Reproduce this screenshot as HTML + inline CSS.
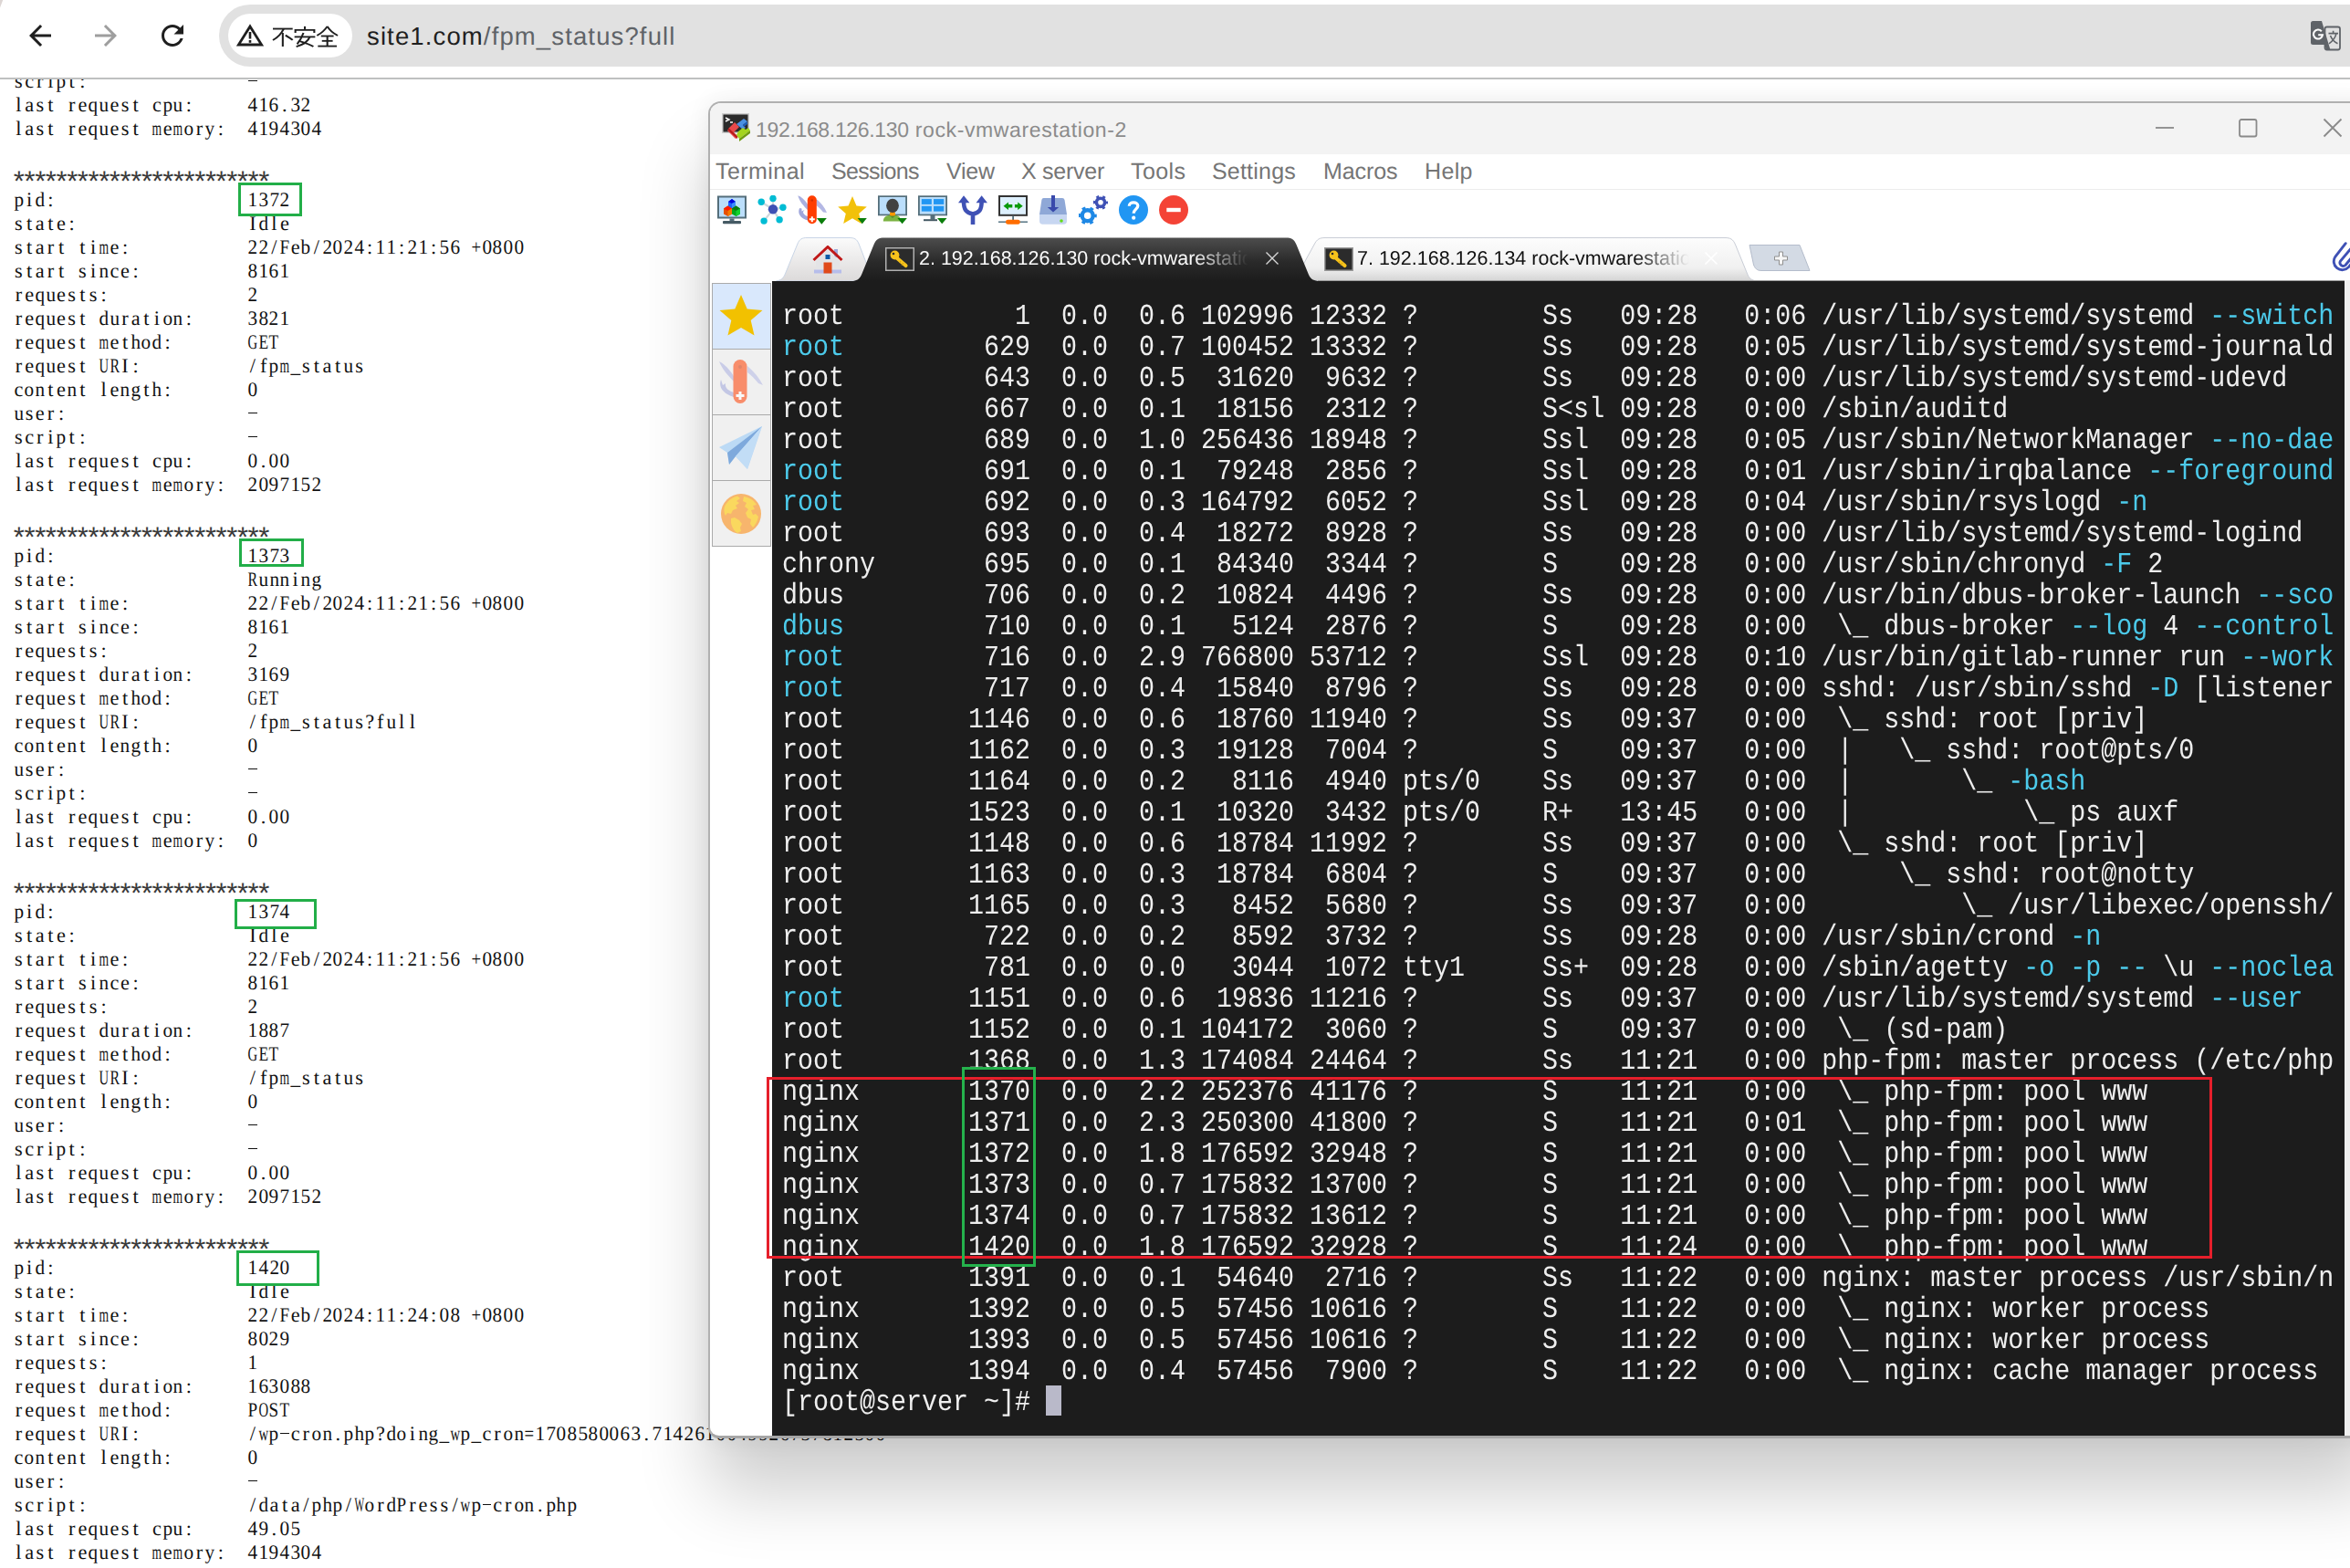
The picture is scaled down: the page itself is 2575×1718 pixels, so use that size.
<!DOCTYPE html>
<html><head><meta charset="utf-8"><title>fpm status</title>
<style>
html,body{margin:0;padding:0}
body{text-rendering:geometricPrecision;width:2575px;height:1718px;position:relative;overflow:hidden;background:#fff;font-family:"Liberation Sans",sans-serif}
*{box-sizing:border-box}
.abs{position:absolute}
#st{position:absolute;left:14.600px;top:76.300px;font-family:"Liberation Serif",serif;font-size:22.300px;line-height:26px;color:#111;white-space:nowrap}
#st .ln{height:26px;white-space:nowrap}
#st b{display:inline-block;width:11.667px;text-align:center;font-weight:normal}
#st b.w{text-align:left;transform-origin:0 50%}
#st i{display:inline-block}
.gb{position:absolute;border:3px solid #22ae48}
#bar{position:absolute;left:0;top:0;width:2575px;height:85px;background:#fff}
#barline{position:absolute;left:0;top:85px;width:2575px;height:2px;background:#bfc0c0}
#pill{position:absolute;left:240px;top:5px;width:2400px;height:68px;border-radius:34px;background:#e1e1e1}
#chip{position:absolute;left:250px;top:15px;width:136px;height:48px;border-radius:24px;background:#fff}
#url{position:absolute;left:402px;top:21.5px;font-size:27.5px;line-height:36px;color:#5f6368;white-space:nowrap;letter-spacing:1.13px}
#url b{font-weight:normal;color:#1f1f1f}
#win{position:absolute;left:776px;top:111px;width:1830px;height:1465px;background:#fff;border:2px solid #b0b0b0;border-bottom:3px solid #a6a6a6;border-radius:14px 0 0 12px;box-shadow:0 58px 78px rgba(0,0,0,0.195),0 0 26px rgba(0,0,0,0.07)}
#title{position:absolute;left:778px;top:113px;width:1800px;height:56px;background:#f3f3f3;border-radius:12px 0 0 0}
#ttext{position:absolute;left:828px;top:128px;font-size:23px;line-height:28px;color:#8b8b8b;white-space:nowrap;letter-spacing:0.23px}
.menu{position:absolute;top:173px;font-size:25px;line-height:30px;color:#757575;white-space:nowrap}
#menuline{position:absolute;left:778px;top:207px;width:1800px;height:1px;background:#ececec}
.ti{position:absolute;top:214px;width:32px;height:32px}
#term{position:absolute;left:846px;top:307.600px;width:1723px;height:1265.400px;background:#1c1c1c}
#tt{position:absolute;left:857.4px;top:330px;margin:0;font-family:"Liberation Mono",monospace;font-size:32px;line-height:34px;color:#eeeeee;transform:scaleX(0.8854);transform-origin:0 0;white-space:pre}
#tt i{font-style:normal;color:#4ccaea}
#cursor{position:absolute;left:1146px;top:1518px;width:17px;height:33px;background:#b9b9c9}
.rb{position:absolute;border:3px solid #e61f2b}
.tabtxt{position:absolute;top:270px;font-size:21.5px;line-height:26px;white-space:nowrap;overflow:hidden}
.sc{position:absolute;left:780px;width:65px;height:73px;border:1px solid #aaa;background:#f0f0f0}
#st s{display:inline-block;width:9.500px;margin:0 1.100px;border-top:1.600px solid #111;vertical-align:7.500px;text-decoration:none}
#st u{text-decoration:none;font-family:"Liberation Mono",monospace;position:relative;top:9.4px;left:-3px;font-size:31px;letter-spacing:-6.933px;line-height:0;color:#3a3a3a}

</style></head>
<body>
<div id="st"><div class="ln"><b>s</b><b>c</b><b>r</b><b>i</b><b class="w" style="transform:translateX(0.53px) scaleX(0.951)">p</b><b>t</b><b>:</b><i style="width:175.005px"></i><s></s></div>
<div class="ln"><b>l</b><b>a</b><b>s</b><b>t</b><i style="width:11.667px"></i><b>r</b><b>e</b><b class="w" style="transform:translateX(0.53px) scaleX(0.951)">q</b><b class="w" style="transform:translateX(0.53px) scaleX(0.951)">u</b><b>e</b><b>s</b><b>t</b><i style="width:11.667px"></i><b>c</b><b class="w" style="transform:translateX(0.53px) scaleX(0.951)">p</b><b class="w" style="transform:translateX(0.53px) scaleX(0.951)">u</b><b>:</b><i style="width:58.335px"></i><b class="w" style="transform:translateX(0.53px) scaleX(0.951)">4</b><b class="w" style="transform:translateX(0.53px) scaleX(0.951)">1</b><b class="w" style="transform:translateX(0.53px) scaleX(0.951)">6</b><b>.</b><b class="w" style="transform:translateX(0.53px) scaleX(0.951)">3</b><b class="w" style="transform:translateX(0.53px) scaleX(0.951)">2</b></div>
<div class="ln"><b>l</b><b>a</b><b>s</b><b>t</b><i style="width:11.667px"></i><b>r</b><b>e</b><b class="w" style="transform:translateX(0.53px) scaleX(0.951)">q</b><b class="w" style="transform:translateX(0.53px) scaleX(0.951)">u</b><b>e</b><b>s</b><b>t</b><i style="width:11.667px"></i><b class="w" style="transform:translateX(0.53px) scaleX(0.611)">m</b><b>e</b><b class="w" style="transform:translateX(0.53px) scaleX(0.611)">m</b><b class="w" style="transform:translateX(0.53px) scaleX(0.951)">o</b><b>r</b><b class="w" style="transform:translateX(0.53px) scaleX(0.951)">y</b><b>:</b><i style="width:23.334px"></i><b class="w" style="transform:translateX(0.53px) scaleX(0.951)">4</b><b class="w" style="transform:translateX(0.53px) scaleX(0.951)">1</b><b class="w" style="transform:translateX(0.53px) scaleX(0.951)">9</b><b class="w" style="transform:translateX(0.53px) scaleX(0.951)">4</b><b class="w" style="transform:translateX(0.53px) scaleX(0.951)">3</b><b class="w" style="transform:translateX(0.53px) scaleX(0.951)">0</b><b class="w" style="transform:translateX(0.53px) scaleX(0.951)">4</b></div>
<div class="ln"></div>
<div class="ln"><u>************************</u></div>
<div class="ln"><b class="w" style="transform:translateX(0.53px) scaleX(0.951)">p</b><b>i</b><b class="w" style="transform:translateX(0.53px) scaleX(0.951)">d</b><b>:</b><i style="width:210.006px"></i><b class="w" style="transform:translateX(0.53px) scaleX(0.951)">1</b><b class="w" style="transform:translateX(0.53px) scaleX(0.951)">3</b><b class="w" style="transform:translateX(0.53px) scaleX(0.951)">7</b><b class="w" style="transform:translateX(0.53px) scaleX(0.951)">2</b></div>
<div class="ln"><b>s</b><b>t</b><b>a</b><b>t</b><b>e</b><b>:</b><i style="width:186.672px"></i><b>I</b><b class="w" style="transform:translateX(0.53px) scaleX(0.951)">d</b><b>l</b><b>e</b></div>
<div class="ln"><b>s</b><b>t</b><b>a</b><b>r</b><b>t</b><i style="width:11.667px"></i><b>t</b><b>i</b><b class="w" style="transform:translateX(0.53px) scaleX(0.611)">m</b><b>e</b><b>:</b><i style="width:128.337px"></i><b class="w" style="transform:translateX(0.53px) scaleX(0.951)">2</b><b class="w" style="transform:translateX(0.53px) scaleX(0.951)">2</b><b>/</b><b class="w" style="transform:translateX(0.53px) scaleX(0.855)">F</b><b>e</b><b class="w" style="transform:translateX(0.53px) scaleX(0.951)">b</b><b>/</b><b class="w" style="transform:translateX(0.53px) scaleX(0.951)">2</b><b class="w" style="transform:translateX(0.53px) scaleX(0.951)">0</b><b class="w" style="transform:translateX(0.53px) scaleX(0.951)">2</b><b class="w" style="transform:translateX(0.53px) scaleX(0.951)">4</b><b>:</b><b class="w" style="transform:translateX(0.53px) scaleX(0.951)">1</b><b class="w" style="transform:translateX(0.53px) scaleX(0.951)">1</b><b>:</b><b class="w" style="transform:translateX(0.53px) scaleX(0.951)">2</b><b class="w" style="transform:translateX(0.53px) scaleX(0.951)">1</b><b>:</b><b class="w" style="transform:translateX(0.53px) scaleX(0.951)">5</b><b class="w" style="transform:translateX(0.53px) scaleX(0.951)">6</b><i style="width:11.667px"></i><b class="w" style="transform:translateX(0.53px) scaleX(0.843)">+</b><b class="w" style="transform:translateX(0.53px) scaleX(0.951)">0</b><b class="w" style="transform:translateX(0.53px) scaleX(0.951)">8</b><b class="w" style="transform:translateX(0.53px) scaleX(0.951)">0</b><b class="w" style="transform:translateX(0.53px) scaleX(0.951)">0</b></div>
<div class="ln"><b>s</b><b>t</b><b>a</b><b>r</b><b>t</b><i style="width:11.667px"></i><b>s</b><b>i</b><b class="w" style="transform:translateX(0.53px) scaleX(0.951)">n</b><b>c</b><b>e</b><b>:</b><i style="width:116.670px"></i><b class="w" style="transform:translateX(0.53px) scaleX(0.951)">8</b><b class="w" style="transform:translateX(0.53px) scaleX(0.951)">1</b><b class="w" style="transform:translateX(0.53px) scaleX(0.951)">6</b><b class="w" style="transform:translateX(0.53px) scaleX(0.951)">1</b></div>
<div class="ln"><b>r</b><b>e</b><b class="w" style="transform:translateX(0.53px) scaleX(0.951)">q</b><b class="w" style="transform:translateX(0.53px) scaleX(0.951)">u</b><b>e</b><b>s</b><b>t</b><b>s</b><b>:</b><i style="width:151.671px"></i><b class="w" style="transform:translateX(0.53px) scaleX(0.951)">2</b></div>
<div class="ln"><b>r</b><b>e</b><b class="w" style="transform:translateX(0.53px) scaleX(0.951)">q</b><b class="w" style="transform:translateX(0.53px) scaleX(0.951)">u</b><b>e</b><b>s</b><b>t</b><i style="width:11.667px"></i><b class="w" style="transform:translateX(0.53px) scaleX(0.951)">d</b><b class="w" style="transform:translateX(0.53px) scaleX(0.951)">u</b><b>r</b><b>a</b><b>t</b><b>i</b><b class="w" style="transform:translateX(0.53px) scaleX(0.951)">o</b><b class="w" style="transform:translateX(0.53px) scaleX(0.951)">n</b><b>:</b><i style="width:58.335px"></i><b class="w" style="transform:translateX(0.53px) scaleX(0.951)">3</b><b class="w" style="transform:translateX(0.53px) scaleX(0.951)">8</b><b class="w" style="transform:translateX(0.53px) scaleX(0.951)">2</b><b class="w" style="transform:translateX(0.53px) scaleX(0.951)">1</b></div>
<div class="ln"><b>r</b><b>e</b><b class="w" style="transform:translateX(0.53px) scaleX(0.951)">q</b><b class="w" style="transform:translateX(0.53px) scaleX(0.951)">u</b><b>e</b><b>s</b><b>t</b><i style="width:11.667px"></i><b class="w" style="transform:translateX(0.53px) scaleX(0.611)">m</b><b>e</b><b>t</b><b class="w" style="transform:translateX(0.53px) scaleX(0.951)">h</b><b class="w" style="transform:translateX(0.53px) scaleX(0.951)">o</b><b class="w" style="transform:translateX(0.53px) scaleX(0.951)">d</b><b>:</b><i style="width:81.669px"></i><b class="w" style="transform:translateX(0.53px) scaleX(0.658)">G</b><b class="w" style="transform:translateX(0.53px) scaleX(0.778)">E</b><b class="w" style="transform:translateX(0.53px) scaleX(0.778)">T</b></div>
<div class="ln"><b>r</b><b>e</b><b class="w" style="transform:translateX(0.53px) scaleX(0.951)">q</b><b class="w" style="transform:translateX(0.53px) scaleX(0.951)">u</b><b>e</b><b>s</b><b>t</b><i style="width:11.667px"></i><b class="w" style="transform:translateX(0.53px) scaleX(0.658)">U</b><b class="w" style="transform:translateX(0.53px) scaleX(0.713)">R</b><b>I</b><b>:</b><i style="width:116.670px"></i><b>/</b><b>f</b><b class="w" style="transform:translateX(0.53px) scaleX(0.951)">p</b><b class="w" style="transform:translateX(0.53px) scaleX(0.611)">m</b><b class="w" style="transform:translateX(0.53px) scaleX(0.951)">_</b><b>s</b><b>t</b><b>a</b><b>t</b><b class="w" style="transform:translateX(0.53px) scaleX(0.951)">u</b><b>s</b></div>
<div class="ln"><b>c</b><b class="w" style="transform:translateX(0.53px) scaleX(0.951)">o</b><b class="w" style="transform:translateX(0.53px) scaleX(0.951)">n</b><b>t</b><b>e</b><b class="w" style="transform:translateX(0.53px) scaleX(0.951)">n</b><b>t</b><i style="width:11.667px"></i><b>l</b><b>e</b><b class="w" style="transform:translateX(0.53px) scaleX(0.951)">n</b><b class="w" style="transform:translateX(0.53px) scaleX(0.951)">g</b><b>t</b><b class="w" style="transform:translateX(0.53px) scaleX(0.951)">h</b><b>:</b><i style="width:81.669px"></i><b class="w" style="transform:translateX(0.53px) scaleX(0.951)">0</b></div>
<div class="ln"><b class="w" style="transform:translateX(0.53px) scaleX(0.951)">u</b><b>s</b><b>e</b><b>r</b><b>:</b><i style="width:198.339px"></i><s></s></div>
<div class="ln"><b>s</b><b>c</b><b>r</b><b>i</b><b class="w" style="transform:translateX(0.53px) scaleX(0.951)">p</b><b>t</b><b>:</b><i style="width:175.005px"></i><s></s></div>
<div class="ln"><b>l</b><b>a</b><b>s</b><b>t</b><i style="width:11.667px"></i><b>r</b><b>e</b><b class="w" style="transform:translateX(0.53px) scaleX(0.951)">q</b><b class="w" style="transform:translateX(0.53px) scaleX(0.951)">u</b><b>e</b><b>s</b><b>t</b><i style="width:11.667px"></i><b>c</b><b class="w" style="transform:translateX(0.53px) scaleX(0.951)">p</b><b class="w" style="transform:translateX(0.53px) scaleX(0.951)">u</b><b>:</b><i style="width:58.335px"></i><b class="w" style="transform:translateX(0.53px) scaleX(0.951)">0</b><b>.</b><b class="w" style="transform:translateX(0.53px) scaleX(0.951)">0</b><b class="w" style="transform:translateX(0.53px) scaleX(0.951)">0</b></div>
<div class="ln"><b>l</b><b>a</b><b>s</b><b>t</b><i style="width:11.667px"></i><b>r</b><b>e</b><b class="w" style="transform:translateX(0.53px) scaleX(0.951)">q</b><b class="w" style="transform:translateX(0.53px) scaleX(0.951)">u</b><b>e</b><b>s</b><b>t</b><i style="width:11.667px"></i><b class="w" style="transform:translateX(0.53px) scaleX(0.611)">m</b><b>e</b><b class="w" style="transform:translateX(0.53px) scaleX(0.611)">m</b><b class="w" style="transform:translateX(0.53px) scaleX(0.951)">o</b><b>r</b><b class="w" style="transform:translateX(0.53px) scaleX(0.951)">y</b><b>:</b><i style="width:23.334px"></i><b class="w" style="transform:translateX(0.53px) scaleX(0.951)">2</b><b class="w" style="transform:translateX(0.53px) scaleX(0.951)">0</b><b class="w" style="transform:translateX(0.53px) scaleX(0.951)">9</b><b class="w" style="transform:translateX(0.53px) scaleX(0.951)">7</b><b class="w" style="transform:translateX(0.53px) scaleX(0.951)">1</b><b class="w" style="transform:translateX(0.53px) scaleX(0.951)">5</b><b class="w" style="transform:translateX(0.53px) scaleX(0.951)">2</b></div>
<div class="ln"></div>
<div class="ln"><u>************************</u></div>
<div class="ln"><b class="w" style="transform:translateX(0.53px) scaleX(0.951)">p</b><b>i</b><b class="w" style="transform:translateX(0.53px) scaleX(0.951)">d</b><b>:</b><i style="width:210.006px"></i><b class="w" style="transform:translateX(0.53px) scaleX(0.951)">1</b><b class="w" style="transform:translateX(0.53px) scaleX(0.951)">3</b><b class="w" style="transform:translateX(0.53px) scaleX(0.951)">7</b><b class="w" style="transform:translateX(0.53px) scaleX(0.951)">3</b></div>
<div class="ln"><b>s</b><b>t</b><b>a</b><b>t</b><b>e</b><b>:</b><i style="width:186.672px"></i><b class="w" style="transform:translateX(0.53px) scaleX(0.713)">R</b><b class="w" style="transform:translateX(0.53px) scaleX(0.951)">u</b><b class="w" style="transform:translateX(0.53px) scaleX(0.951)">n</b><b class="w" style="transform:translateX(0.53px) scaleX(0.951)">n</b><b>i</b><b class="w" style="transform:translateX(0.53px) scaleX(0.951)">n</b><b class="w" style="transform:translateX(0.53px) scaleX(0.951)">g</b></div>
<div class="ln"><b>s</b><b>t</b><b>a</b><b>r</b><b>t</b><i style="width:11.667px"></i><b>t</b><b>i</b><b class="w" style="transform:translateX(0.53px) scaleX(0.611)">m</b><b>e</b><b>:</b><i style="width:128.337px"></i><b class="w" style="transform:translateX(0.53px) scaleX(0.951)">2</b><b class="w" style="transform:translateX(0.53px) scaleX(0.951)">2</b><b>/</b><b class="w" style="transform:translateX(0.53px) scaleX(0.855)">F</b><b>e</b><b class="w" style="transform:translateX(0.53px) scaleX(0.951)">b</b><b>/</b><b class="w" style="transform:translateX(0.53px) scaleX(0.951)">2</b><b class="w" style="transform:translateX(0.53px) scaleX(0.951)">0</b><b class="w" style="transform:translateX(0.53px) scaleX(0.951)">2</b><b class="w" style="transform:translateX(0.53px) scaleX(0.951)">4</b><b>:</b><b class="w" style="transform:translateX(0.53px) scaleX(0.951)">1</b><b class="w" style="transform:translateX(0.53px) scaleX(0.951)">1</b><b>:</b><b class="w" style="transform:translateX(0.53px) scaleX(0.951)">2</b><b class="w" style="transform:translateX(0.53px) scaleX(0.951)">1</b><b>:</b><b class="w" style="transform:translateX(0.53px) scaleX(0.951)">5</b><b class="w" style="transform:translateX(0.53px) scaleX(0.951)">6</b><i style="width:11.667px"></i><b class="w" style="transform:translateX(0.53px) scaleX(0.843)">+</b><b class="w" style="transform:translateX(0.53px) scaleX(0.951)">0</b><b class="w" style="transform:translateX(0.53px) scaleX(0.951)">8</b><b class="w" style="transform:translateX(0.53px) scaleX(0.951)">0</b><b class="w" style="transform:translateX(0.53px) scaleX(0.951)">0</b></div>
<div class="ln"><b>s</b><b>t</b><b>a</b><b>r</b><b>t</b><i style="width:11.667px"></i><b>s</b><b>i</b><b class="w" style="transform:translateX(0.53px) scaleX(0.951)">n</b><b>c</b><b>e</b><b>:</b><i style="width:116.670px"></i><b class="w" style="transform:translateX(0.53px) scaleX(0.951)">8</b><b class="w" style="transform:translateX(0.53px) scaleX(0.951)">1</b><b class="w" style="transform:translateX(0.53px) scaleX(0.951)">6</b><b class="w" style="transform:translateX(0.53px) scaleX(0.951)">1</b></div>
<div class="ln"><b>r</b><b>e</b><b class="w" style="transform:translateX(0.53px) scaleX(0.951)">q</b><b class="w" style="transform:translateX(0.53px) scaleX(0.951)">u</b><b>e</b><b>s</b><b>t</b><b>s</b><b>:</b><i style="width:151.671px"></i><b class="w" style="transform:translateX(0.53px) scaleX(0.951)">2</b></div>
<div class="ln"><b>r</b><b>e</b><b class="w" style="transform:translateX(0.53px) scaleX(0.951)">q</b><b class="w" style="transform:translateX(0.53px) scaleX(0.951)">u</b><b>e</b><b>s</b><b>t</b><i style="width:11.667px"></i><b class="w" style="transform:translateX(0.53px) scaleX(0.951)">d</b><b class="w" style="transform:translateX(0.53px) scaleX(0.951)">u</b><b>r</b><b>a</b><b>t</b><b>i</b><b class="w" style="transform:translateX(0.53px) scaleX(0.951)">o</b><b class="w" style="transform:translateX(0.53px) scaleX(0.951)">n</b><b>:</b><i style="width:58.335px"></i><b class="w" style="transform:translateX(0.53px) scaleX(0.951)">3</b><b class="w" style="transform:translateX(0.53px) scaleX(0.951)">1</b><b class="w" style="transform:translateX(0.53px) scaleX(0.951)">6</b><b class="w" style="transform:translateX(0.53px) scaleX(0.951)">9</b></div>
<div class="ln"><b>r</b><b>e</b><b class="w" style="transform:translateX(0.53px) scaleX(0.951)">q</b><b class="w" style="transform:translateX(0.53px) scaleX(0.951)">u</b><b>e</b><b>s</b><b>t</b><i style="width:11.667px"></i><b class="w" style="transform:translateX(0.53px) scaleX(0.611)">m</b><b>e</b><b>t</b><b class="w" style="transform:translateX(0.53px) scaleX(0.951)">h</b><b class="w" style="transform:translateX(0.53px) scaleX(0.951)">o</b><b class="w" style="transform:translateX(0.53px) scaleX(0.951)">d</b><b>:</b><i style="width:81.669px"></i><b class="w" style="transform:translateX(0.53px) scaleX(0.658)">G</b><b class="w" style="transform:translateX(0.53px) scaleX(0.778)">E</b><b class="w" style="transform:translateX(0.53px) scaleX(0.778)">T</b></div>
<div class="ln"><b>r</b><b>e</b><b class="w" style="transform:translateX(0.53px) scaleX(0.951)">q</b><b class="w" style="transform:translateX(0.53px) scaleX(0.951)">u</b><b>e</b><b>s</b><b>t</b><i style="width:11.667px"></i><b class="w" style="transform:translateX(0.53px) scaleX(0.658)">U</b><b class="w" style="transform:translateX(0.53px) scaleX(0.713)">R</b><b>I</b><b>:</b><i style="width:116.670px"></i><b>/</b><b>f</b><b class="w" style="transform:translateX(0.53px) scaleX(0.951)">p</b><b class="w" style="transform:translateX(0.53px) scaleX(0.611)">m</b><b class="w" style="transform:translateX(0.53px) scaleX(0.951)">_</b><b>s</b><b>t</b><b>a</b><b>t</b><b class="w" style="transform:translateX(0.53px) scaleX(0.951)">u</b><b>s</b><b>?</b><b>f</b><b class="w" style="transform:translateX(0.53px) scaleX(0.951)">u</b><b>l</b><b>l</b></div>
<div class="ln"><b>c</b><b class="w" style="transform:translateX(0.53px) scaleX(0.951)">o</b><b class="w" style="transform:translateX(0.53px) scaleX(0.951)">n</b><b>t</b><b>e</b><b class="w" style="transform:translateX(0.53px) scaleX(0.951)">n</b><b>t</b><i style="width:11.667px"></i><b>l</b><b>e</b><b class="w" style="transform:translateX(0.53px) scaleX(0.951)">n</b><b class="w" style="transform:translateX(0.53px) scaleX(0.951)">g</b><b>t</b><b class="w" style="transform:translateX(0.53px) scaleX(0.951)">h</b><b>:</b><i style="width:81.669px"></i><b class="w" style="transform:translateX(0.53px) scaleX(0.951)">0</b></div>
<div class="ln"><b class="w" style="transform:translateX(0.53px) scaleX(0.951)">u</b><b>s</b><b>e</b><b>r</b><b>:</b><i style="width:198.339px"></i><s></s></div>
<div class="ln"><b>s</b><b>c</b><b>r</b><b>i</b><b class="w" style="transform:translateX(0.53px) scaleX(0.951)">p</b><b>t</b><b>:</b><i style="width:175.005px"></i><s></s></div>
<div class="ln"><b>l</b><b>a</b><b>s</b><b>t</b><i style="width:11.667px"></i><b>r</b><b>e</b><b class="w" style="transform:translateX(0.53px) scaleX(0.951)">q</b><b class="w" style="transform:translateX(0.53px) scaleX(0.951)">u</b><b>e</b><b>s</b><b>t</b><i style="width:11.667px"></i><b>c</b><b class="w" style="transform:translateX(0.53px) scaleX(0.951)">p</b><b class="w" style="transform:translateX(0.53px) scaleX(0.951)">u</b><b>:</b><i style="width:58.335px"></i><b class="w" style="transform:translateX(0.53px) scaleX(0.951)">0</b><b>.</b><b class="w" style="transform:translateX(0.53px) scaleX(0.951)">0</b><b class="w" style="transform:translateX(0.53px) scaleX(0.951)">0</b></div>
<div class="ln"><b>l</b><b>a</b><b>s</b><b>t</b><i style="width:11.667px"></i><b>r</b><b>e</b><b class="w" style="transform:translateX(0.53px) scaleX(0.951)">q</b><b class="w" style="transform:translateX(0.53px) scaleX(0.951)">u</b><b>e</b><b>s</b><b>t</b><i style="width:11.667px"></i><b class="w" style="transform:translateX(0.53px) scaleX(0.611)">m</b><b>e</b><b class="w" style="transform:translateX(0.53px) scaleX(0.611)">m</b><b class="w" style="transform:translateX(0.53px) scaleX(0.951)">o</b><b>r</b><b class="w" style="transform:translateX(0.53px) scaleX(0.951)">y</b><b>:</b><i style="width:23.334px"></i><b class="w" style="transform:translateX(0.53px) scaleX(0.951)">0</b></div>
<div class="ln"></div>
<div class="ln"><u>************************</u></div>
<div class="ln"><b class="w" style="transform:translateX(0.53px) scaleX(0.951)">p</b><b>i</b><b class="w" style="transform:translateX(0.53px) scaleX(0.951)">d</b><b>:</b><i style="width:210.006px"></i><b class="w" style="transform:translateX(0.53px) scaleX(0.951)">1</b><b class="w" style="transform:translateX(0.53px) scaleX(0.951)">3</b><b class="w" style="transform:translateX(0.53px) scaleX(0.951)">7</b><b class="w" style="transform:translateX(0.53px) scaleX(0.951)">4</b></div>
<div class="ln"><b>s</b><b>t</b><b>a</b><b>t</b><b>e</b><b>:</b><i style="width:186.672px"></i><b>I</b><b class="w" style="transform:translateX(0.53px) scaleX(0.951)">d</b><b>l</b><b>e</b></div>
<div class="ln"><b>s</b><b>t</b><b>a</b><b>r</b><b>t</b><i style="width:11.667px"></i><b>t</b><b>i</b><b class="w" style="transform:translateX(0.53px) scaleX(0.611)">m</b><b>e</b><b>:</b><i style="width:128.337px"></i><b class="w" style="transform:translateX(0.53px) scaleX(0.951)">2</b><b class="w" style="transform:translateX(0.53px) scaleX(0.951)">2</b><b>/</b><b class="w" style="transform:translateX(0.53px) scaleX(0.855)">F</b><b>e</b><b class="w" style="transform:translateX(0.53px) scaleX(0.951)">b</b><b>/</b><b class="w" style="transform:translateX(0.53px) scaleX(0.951)">2</b><b class="w" style="transform:translateX(0.53px) scaleX(0.951)">0</b><b class="w" style="transform:translateX(0.53px) scaleX(0.951)">2</b><b class="w" style="transform:translateX(0.53px) scaleX(0.951)">4</b><b>:</b><b class="w" style="transform:translateX(0.53px) scaleX(0.951)">1</b><b class="w" style="transform:translateX(0.53px) scaleX(0.951)">1</b><b>:</b><b class="w" style="transform:translateX(0.53px) scaleX(0.951)">2</b><b class="w" style="transform:translateX(0.53px) scaleX(0.951)">1</b><b>:</b><b class="w" style="transform:translateX(0.53px) scaleX(0.951)">5</b><b class="w" style="transform:translateX(0.53px) scaleX(0.951)">6</b><i style="width:11.667px"></i><b class="w" style="transform:translateX(0.53px) scaleX(0.843)">+</b><b class="w" style="transform:translateX(0.53px) scaleX(0.951)">0</b><b class="w" style="transform:translateX(0.53px) scaleX(0.951)">8</b><b class="w" style="transform:translateX(0.53px) scaleX(0.951)">0</b><b class="w" style="transform:translateX(0.53px) scaleX(0.951)">0</b></div>
<div class="ln"><b>s</b><b>t</b><b>a</b><b>r</b><b>t</b><i style="width:11.667px"></i><b>s</b><b>i</b><b class="w" style="transform:translateX(0.53px) scaleX(0.951)">n</b><b>c</b><b>e</b><b>:</b><i style="width:116.670px"></i><b class="w" style="transform:translateX(0.53px) scaleX(0.951)">8</b><b class="w" style="transform:translateX(0.53px) scaleX(0.951)">1</b><b class="w" style="transform:translateX(0.53px) scaleX(0.951)">6</b><b class="w" style="transform:translateX(0.53px) scaleX(0.951)">1</b></div>
<div class="ln"><b>r</b><b>e</b><b class="w" style="transform:translateX(0.53px) scaleX(0.951)">q</b><b class="w" style="transform:translateX(0.53px) scaleX(0.951)">u</b><b>e</b><b>s</b><b>t</b><b>s</b><b>:</b><i style="width:151.671px"></i><b class="w" style="transform:translateX(0.53px) scaleX(0.951)">2</b></div>
<div class="ln"><b>r</b><b>e</b><b class="w" style="transform:translateX(0.53px) scaleX(0.951)">q</b><b class="w" style="transform:translateX(0.53px) scaleX(0.951)">u</b><b>e</b><b>s</b><b>t</b><i style="width:11.667px"></i><b class="w" style="transform:translateX(0.53px) scaleX(0.951)">d</b><b class="w" style="transform:translateX(0.53px) scaleX(0.951)">u</b><b>r</b><b>a</b><b>t</b><b>i</b><b class="w" style="transform:translateX(0.53px) scaleX(0.951)">o</b><b class="w" style="transform:translateX(0.53px) scaleX(0.951)">n</b><b>:</b><i style="width:58.335px"></i><b class="w" style="transform:translateX(0.53px) scaleX(0.951)">1</b><b class="w" style="transform:translateX(0.53px) scaleX(0.951)">8</b><b class="w" style="transform:translateX(0.53px) scaleX(0.951)">8</b><b class="w" style="transform:translateX(0.53px) scaleX(0.951)">7</b></div>
<div class="ln"><b>r</b><b>e</b><b class="w" style="transform:translateX(0.53px) scaleX(0.951)">q</b><b class="w" style="transform:translateX(0.53px) scaleX(0.951)">u</b><b>e</b><b>s</b><b>t</b><i style="width:11.667px"></i><b class="w" style="transform:translateX(0.53px) scaleX(0.611)">m</b><b>e</b><b>t</b><b class="w" style="transform:translateX(0.53px) scaleX(0.951)">h</b><b class="w" style="transform:translateX(0.53px) scaleX(0.951)">o</b><b class="w" style="transform:translateX(0.53px) scaleX(0.951)">d</b><b>:</b><i style="width:81.669px"></i><b class="w" style="transform:translateX(0.53px) scaleX(0.658)">G</b><b class="w" style="transform:translateX(0.53px) scaleX(0.778)">E</b><b class="w" style="transform:translateX(0.53px) scaleX(0.778)">T</b></div>
<div class="ln"><b>r</b><b>e</b><b class="w" style="transform:translateX(0.53px) scaleX(0.951)">q</b><b class="w" style="transform:translateX(0.53px) scaleX(0.951)">u</b><b>e</b><b>s</b><b>t</b><i style="width:11.667px"></i><b class="w" style="transform:translateX(0.53px) scaleX(0.658)">U</b><b class="w" style="transform:translateX(0.53px) scaleX(0.713)">R</b><b>I</b><b>:</b><i style="width:116.670px"></i><b>/</b><b>f</b><b class="w" style="transform:translateX(0.53px) scaleX(0.951)">p</b><b class="w" style="transform:translateX(0.53px) scaleX(0.611)">m</b><b class="w" style="transform:translateX(0.53px) scaleX(0.951)">_</b><b>s</b><b>t</b><b>a</b><b>t</b><b class="w" style="transform:translateX(0.53px) scaleX(0.951)">u</b><b>s</b></div>
<div class="ln"><b>c</b><b class="w" style="transform:translateX(0.53px) scaleX(0.951)">o</b><b class="w" style="transform:translateX(0.53px) scaleX(0.951)">n</b><b>t</b><b>e</b><b class="w" style="transform:translateX(0.53px) scaleX(0.951)">n</b><b>t</b><i style="width:11.667px"></i><b>l</b><b>e</b><b class="w" style="transform:translateX(0.53px) scaleX(0.951)">n</b><b class="w" style="transform:translateX(0.53px) scaleX(0.951)">g</b><b>t</b><b class="w" style="transform:translateX(0.53px) scaleX(0.951)">h</b><b>:</b><i style="width:81.669px"></i><b class="w" style="transform:translateX(0.53px) scaleX(0.951)">0</b></div>
<div class="ln"><b class="w" style="transform:translateX(0.53px) scaleX(0.951)">u</b><b>s</b><b>e</b><b>r</b><b>:</b><i style="width:198.339px"></i><s></s></div>
<div class="ln"><b>s</b><b>c</b><b>r</b><b>i</b><b class="w" style="transform:translateX(0.53px) scaleX(0.951)">p</b><b>t</b><b>:</b><i style="width:175.005px"></i><s></s></div>
<div class="ln"><b>l</b><b>a</b><b>s</b><b>t</b><i style="width:11.667px"></i><b>r</b><b>e</b><b class="w" style="transform:translateX(0.53px) scaleX(0.951)">q</b><b class="w" style="transform:translateX(0.53px) scaleX(0.951)">u</b><b>e</b><b>s</b><b>t</b><i style="width:11.667px"></i><b>c</b><b class="w" style="transform:translateX(0.53px) scaleX(0.951)">p</b><b class="w" style="transform:translateX(0.53px) scaleX(0.951)">u</b><b>:</b><i style="width:58.335px"></i><b class="w" style="transform:translateX(0.53px) scaleX(0.951)">0</b><b>.</b><b class="w" style="transform:translateX(0.53px) scaleX(0.951)">0</b><b class="w" style="transform:translateX(0.53px) scaleX(0.951)">0</b></div>
<div class="ln"><b>l</b><b>a</b><b>s</b><b>t</b><i style="width:11.667px"></i><b>r</b><b>e</b><b class="w" style="transform:translateX(0.53px) scaleX(0.951)">q</b><b class="w" style="transform:translateX(0.53px) scaleX(0.951)">u</b><b>e</b><b>s</b><b>t</b><i style="width:11.667px"></i><b class="w" style="transform:translateX(0.53px) scaleX(0.611)">m</b><b>e</b><b class="w" style="transform:translateX(0.53px) scaleX(0.611)">m</b><b class="w" style="transform:translateX(0.53px) scaleX(0.951)">o</b><b>r</b><b class="w" style="transform:translateX(0.53px) scaleX(0.951)">y</b><b>:</b><i style="width:23.334px"></i><b class="w" style="transform:translateX(0.53px) scaleX(0.951)">2</b><b class="w" style="transform:translateX(0.53px) scaleX(0.951)">0</b><b class="w" style="transform:translateX(0.53px) scaleX(0.951)">9</b><b class="w" style="transform:translateX(0.53px) scaleX(0.951)">7</b><b class="w" style="transform:translateX(0.53px) scaleX(0.951)">1</b><b class="w" style="transform:translateX(0.53px) scaleX(0.951)">5</b><b class="w" style="transform:translateX(0.53px) scaleX(0.951)">2</b></div>
<div class="ln"></div>
<div class="ln"><u>************************</u></div>
<div class="ln"><b class="w" style="transform:translateX(0.53px) scaleX(0.951)">p</b><b>i</b><b class="w" style="transform:translateX(0.53px) scaleX(0.951)">d</b><b>:</b><i style="width:210.006px"></i><b class="w" style="transform:translateX(0.53px) scaleX(0.951)">1</b><b class="w" style="transform:translateX(0.53px) scaleX(0.951)">4</b><b class="w" style="transform:translateX(0.53px) scaleX(0.951)">2</b><b class="w" style="transform:translateX(0.53px) scaleX(0.951)">0</b></div>
<div class="ln"><b>s</b><b>t</b><b>a</b><b>t</b><b>e</b><b>:</b><i style="width:186.672px"></i><b>I</b><b class="w" style="transform:translateX(0.53px) scaleX(0.951)">d</b><b>l</b><b>e</b></div>
<div class="ln"><b>s</b><b>t</b><b>a</b><b>r</b><b>t</b><i style="width:11.667px"></i><b>t</b><b>i</b><b class="w" style="transform:translateX(0.53px) scaleX(0.611)">m</b><b>e</b><b>:</b><i style="width:128.337px"></i><b class="w" style="transform:translateX(0.53px) scaleX(0.951)">2</b><b class="w" style="transform:translateX(0.53px) scaleX(0.951)">2</b><b>/</b><b class="w" style="transform:translateX(0.53px) scaleX(0.855)">F</b><b>e</b><b class="w" style="transform:translateX(0.53px) scaleX(0.951)">b</b><b>/</b><b class="w" style="transform:translateX(0.53px) scaleX(0.951)">2</b><b class="w" style="transform:translateX(0.53px) scaleX(0.951)">0</b><b class="w" style="transform:translateX(0.53px) scaleX(0.951)">2</b><b class="w" style="transform:translateX(0.53px) scaleX(0.951)">4</b><b>:</b><b class="w" style="transform:translateX(0.53px) scaleX(0.951)">1</b><b class="w" style="transform:translateX(0.53px) scaleX(0.951)">1</b><b>:</b><b class="w" style="transform:translateX(0.53px) scaleX(0.951)">2</b><b class="w" style="transform:translateX(0.53px) scaleX(0.951)">4</b><b>:</b><b class="w" style="transform:translateX(0.53px) scaleX(0.951)">0</b><b class="w" style="transform:translateX(0.53px) scaleX(0.951)">8</b><i style="width:11.667px"></i><b class="w" style="transform:translateX(0.53px) scaleX(0.843)">+</b><b class="w" style="transform:translateX(0.53px) scaleX(0.951)">0</b><b class="w" style="transform:translateX(0.53px) scaleX(0.951)">8</b><b class="w" style="transform:translateX(0.53px) scaleX(0.951)">0</b><b class="w" style="transform:translateX(0.53px) scaleX(0.951)">0</b></div>
<div class="ln"><b>s</b><b>t</b><b>a</b><b>r</b><b>t</b><i style="width:11.667px"></i><b>s</b><b>i</b><b class="w" style="transform:translateX(0.53px) scaleX(0.951)">n</b><b>c</b><b>e</b><b>:</b><i style="width:116.670px"></i><b class="w" style="transform:translateX(0.53px) scaleX(0.951)">8</b><b class="w" style="transform:translateX(0.53px) scaleX(0.951)">0</b><b class="w" style="transform:translateX(0.53px) scaleX(0.951)">2</b><b class="w" style="transform:translateX(0.53px) scaleX(0.951)">9</b></div>
<div class="ln"><b>r</b><b>e</b><b class="w" style="transform:translateX(0.53px) scaleX(0.951)">q</b><b class="w" style="transform:translateX(0.53px) scaleX(0.951)">u</b><b>e</b><b>s</b><b>t</b><b>s</b><b>:</b><i style="width:151.671px"></i><b class="w" style="transform:translateX(0.53px) scaleX(0.951)">1</b></div>
<div class="ln"><b>r</b><b>e</b><b class="w" style="transform:translateX(0.53px) scaleX(0.951)">q</b><b class="w" style="transform:translateX(0.53px) scaleX(0.951)">u</b><b>e</b><b>s</b><b>t</b><i style="width:11.667px"></i><b class="w" style="transform:translateX(0.53px) scaleX(0.951)">d</b><b class="w" style="transform:translateX(0.53px) scaleX(0.951)">u</b><b>r</b><b>a</b><b>t</b><b>i</b><b class="w" style="transform:translateX(0.53px) scaleX(0.951)">o</b><b class="w" style="transform:translateX(0.53px) scaleX(0.951)">n</b><b>:</b><i style="width:58.335px"></i><b class="w" style="transform:translateX(0.53px) scaleX(0.951)">1</b><b class="w" style="transform:translateX(0.53px) scaleX(0.951)">6</b><b class="w" style="transform:translateX(0.53px) scaleX(0.951)">3</b><b class="w" style="transform:translateX(0.53px) scaleX(0.951)">0</b><b class="w" style="transform:translateX(0.53px) scaleX(0.951)">8</b><b class="w" style="transform:translateX(0.53px) scaleX(0.951)">8</b></div>
<div class="ln"><b>r</b><b>e</b><b class="w" style="transform:translateX(0.53px) scaleX(0.951)">q</b><b class="w" style="transform:translateX(0.53px) scaleX(0.951)">u</b><b>e</b><b>s</b><b>t</b><i style="width:11.667px"></i><b class="w" style="transform:translateX(0.53px) scaleX(0.611)">m</b><b>e</b><b>t</b><b class="w" style="transform:translateX(0.53px) scaleX(0.951)">h</b><b class="w" style="transform:translateX(0.53px) scaleX(0.951)">o</b><b class="w" style="transform:translateX(0.53px) scaleX(0.951)">d</b><b>:</b><i style="width:81.669px"></i><b class="w" style="transform:translateX(0.53px) scaleX(0.855)">P</b><b class="w" style="transform:translateX(0.53px) scaleX(0.658)">O</b><b class="w" style="transform:translateX(0.53px) scaleX(0.855)">S</b><b class="w" style="transform:translateX(0.53px) scaleX(0.778)">T</b></div>
<div class="ln"><b>r</b><b>e</b><b class="w" style="transform:translateX(0.53px) scaleX(0.951)">q</b><b class="w" style="transform:translateX(0.53px) scaleX(0.951)">u</b><b>e</b><b>s</b><b>t</b><i style="width:11.667px"></i><b class="w" style="transform:translateX(0.53px) scaleX(0.658)">U</b><b class="w" style="transform:translateX(0.53px) scaleX(0.713)">R</b><b>I</b><b>:</b><i style="width:116.670px"></i><b>/</b><b class="w" style="transform:translateX(0.53px) scaleX(0.658)">w</b><b class="w" style="transform:translateX(0.53px) scaleX(0.951)">p</b><s></s><b>c</b><b>r</b><b class="w" style="transform:translateX(0.53px) scaleX(0.951)">o</b><b class="w" style="transform:translateX(0.53px) scaleX(0.951)">n</b><b>.</b><b class="w" style="transform:translateX(0.53px) scaleX(0.951)">p</b><b class="w" style="transform:translateX(0.53px) scaleX(0.951)">h</b><b class="w" style="transform:translateX(0.53px) scaleX(0.951)">p</b><b>?</b><b class="w" style="transform:translateX(0.53px) scaleX(0.951)">d</b><b class="w" style="transform:translateX(0.53px) scaleX(0.951)">o</b><b>i</b><b class="w" style="transform:translateX(0.53px) scaleX(0.951)">n</b><b class="w" style="transform:translateX(0.53px) scaleX(0.951)">g</b><b class="w" style="transform:translateX(0.53px) scaleX(0.951)">_</b><b class="w" style="transform:translateX(0.53px) scaleX(0.658)">w</b><b class="w" style="transform:translateX(0.53px) scaleX(0.951)">p</b><b class="w" style="transform:translateX(0.53px) scaleX(0.951)">_</b><b>c</b><b>r</b><b class="w" style="transform:translateX(0.53px) scaleX(0.951)">o</b><b class="w" style="transform:translateX(0.53px) scaleX(0.951)">n</b><b class="w" style="transform:translateX(0.53px) scaleX(0.843)">=</b><b class="w" style="transform:translateX(0.53px) scaleX(0.951)">1</b><b class="w" style="transform:translateX(0.53px) scaleX(0.951)">7</b><b class="w" style="transform:translateX(0.53px) scaleX(0.951)">0</b><b class="w" style="transform:translateX(0.53px) scaleX(0.951)">8</b><b class="w" style="transform:translateX(0.53px) scaleX(0.951)">5</b><b class="w" style="transform:translateX(0.53px) scaleX(0.951)">8</b><b class="w" style="transform:translateX(0.53px) scaleX(0.951)">0</b><b class="w" style="transform:translateX(0.53px) scaleX(0.951)">0</b><b class="w" style="transform:translateX(0.53px) scaleX(0.951)">6</b><b class="w" style="transform:translateX(0.53px) scaleX(0.951)">3</b><b>.</b><b class="w" style="transform:translateX(0.53px) scaleX(0.951)">7</b><b class="w" style="transform:translateX(0.53px) scaleX(0.951)">1</b><b class="w" style="transform:translateX(0.53px) scaleX(0.951)">4</b><b class="w" style="transform:translateX(0.53px) scaleX(0.951)">2</b><b class="w" style="transform:translateX(0.53px) scaleX(0.951)">6</b><b class="w" style="transform:translateX(0.53px) scaleX(0.951)">1</b><b class="w" style="transform:translateX(0.53px) scaleX(0.951)">0</b><b class="w" style="transform:translateX(0.53px) scaleX(0.951)">0</b><b class="w" style="transform:translateX(0.53px) scaleX(0.951)">4</b><b class="w" style="transform:translateX(0.53px) scaleX(0.951)">9</b><b class="w" style="transform:translateX(0.53px) scaleX(0.951)">9</b><b class="w" style="transform:translateX(0.53px) scaleX(0.951)">2</b><b class="w" style="transform:translateX(0.53px) scaleX(0.951)">6</b><b class="w" style="transform:translateX(0.53px) scaleX(0.951)">7</b><b class="w" style="transform:translateX(0.53px) scaleX(0.951)">5</b><b class="w" style="transform:translateX(0.53px) scaleX(0.951)">7</b><b class="w" style="transform:translateX(0.53px) scaleX(0.951)">8</b><b class="w" style="transform:translateX(0.53px) scaleX(0.951)">1</b><b class="w" style="transform:translateX(0.53px) scaleX(0.951)">2</b><b class="w" style="transform:translateX(0.53px) scaleX(0.951)">5</b><b class="w" style="transform:translateX(0.53px) scaleX(0.951)">0</b><b class="w" style="transform:translateX(0.53px) scaleX(0.951)">0</b></div>
<div class="ln"><b>c</b><b class="w" style="transform:translateX(0.53px) scaleX(0.951)">o</b><b class="w" style="transform:translateX(0.53px) scaleX(0.951)">n</b><b>t</b><b>e</b><b class="w" style="transform:translateX(0.53px) scaleX(0.951)">n</b><b>t</b><i style="width:11.667px"></i><b>l</b><b>e</b><b class="w" style="transform:translateX(0.53px) scaleX(0.951)">n</b><b class="w" style="transform:translateX(0.53px) scaleX(0.951)">g</b><b>t</b><b class="w" style="transform:translateX(0.53px) scaleX(0.951)">h</b><b>:</b><i style="width:81.669px"></i><b class="w" style="transform:translateX(0.53px) scaleX(0.951)">0</b></div>
<div class="ln"><b class="w" style="transform:translateX(0.53px) scaleX(0.951)">u</b><b>s</b><b>e</b><b>r</b><b>:</b><i style="width:198.339px"></i><s></s></div>
<div class="ln"><b>s</b><b>c</b><b>r</b><b>i</b><b class="w" style="transform:translateX(0.53px) scaleX(0.951)">p</b><b>t</b><b>:</b><i style="width:175.005px"></i><b>/</b><b class="w" style="transform:translateX(0.53px) scaleX(0.951)">d</b><b>a</b><b>t</b><b>a</b><b>/</b><b class="w" style="transform:translateX(0.53px) scaleX(0.951)">p</b><b class="w" style="transform:translateX(0.53px) scaleX(0.951)">h</b><b class="w" style="transform:translateX(0.53px) scaleX(0.951)">p</b><b>/</b><b class="w" style="transform:translateX(0.53px) scaleX(0.504)">W</b><b class="w" style="transform:translateX(0.53px) scaleX(0.951)">o</b><b>r</b><b class="w" style="transform:translateX(0.53px) scaleX(0.951)">d</b><b class="w" style="transform:translateX(0.53px) scaleX(0.855)">P</b><b>r</b><b>e</b><b>s</b><b>s</b><b>/</b><b class="w" style="transform:translateX(0.53px) scaleX(0.658)">w</b><b class="w" style="transform:translateX(0.53px) scaleX(0.951)">p</b><s></s><b>c</b><b>r</b><b class="w" style="transform:translateX(0.53px) scaleX(0.951)">o</b><b class="w" style="transform:translateX(0.53px) scaleX(0.951)">n</b><b>.</b><b class="w" style="transform:translateX(0.53px) scaleX(0.951)">p</b><b class="w" style="transform:translateX(0.53px) scaleX(0.951)">h</b><b class="w" style="transform:translateX(0.53px) scaleX(0.951)">p</b></div>
<div class="ln"><b>l</b><b>a</b><b>s</b><b>t</b><i style="width:11.667px"></i><b>r</b><b>e</b><b class="w" style="transform:translateX(0.53px) scaleX(0.951)">q</b><b class="w" style="transform:translateX(0.53px) scaleX(0.951)">u</b><b>e</b><b>s</b><b>t</b><i style="width:11.667px"></i><b>c</b><b class="w" style="transform:translateX(0.53px) scaleX(0.951)">p</b><b class="w" style="transform:translateX(0.53px) scaleX(0.951)">u</b><b>:</b><i style="width:58.335px"></i><b class="w" style="transform:translateX(0.53px) scaleX(0.951)">4</b><b class="w" style="transform:translateX(0.53px) scaleX(0.951)">9</b><b>.</b><b class="w" style="transform:translateX(0.53px) scaleX(0.951)">0</b><b class="w" style="transform:translateX(0.53px) scaleX(0.951)">5</b></div>
<div class="ln"><b>l</b><b>a</b><b>s</b><b>t</b><i style="width:11.667px"></i><b>r</b><b>e</b><b class="w" style="transform:translateX(0.53px) scaleX(0.951)">q</b><b class="w" style="transform:translateX(0.53px) scaleX(0.951)">u</b><b>e</b><b>s</b><b>t</b><i style="width:11.667px"></i><b class="w" style="transform:translateX(0.53px) scaleX(0.611)">m</b><b>e</b><b class="w" style="transform:translateX(0.53px) scaleX(0.611)">m</b><b class="w" style="transform:translateX(0.53px) scaleX(0.951)">o</b><b>r</b><b class="w" style="transform:translateX(0.53px) scaleX(0.951)">y</b><b>:</b><i style="width:23.334px"></i><b class="w" style="transform:translateX(0.53px) scaleX(0.951)">4</b><b class="w" style="transform:translateX(0.53px) scaleX(0.951)">1</b><b class="w" style="transform:translateX(0.53px) scaleX(0.951)">9</b><b class="w" style="transform:translateX(0.53px) scaleX(0.951)">4</b><b class="w" style="transform:translateX(0.53px) scaleX(0.951)">3</b><b class="w" style="transform:translateX(0.53px) scaleX(0.951)">0</b><b class="w" style="transform:translateX(0.53px) scaleX(0.951)">4</b></div></div>
<div class="gb" style="left:261px;top:200px;width:70px;height:37px"></div>
<div class="gb" style="left:262px;top:590px;width:71px;height:31px"></div>
<div class="gb" style="left:257px;top:985px;width:90px;height:33px"></div>
<div class="gb" style="left:259px;top:1370px;width:91px;height:39px"></div>
<div id="bar"></div><svg class="abs" style="left:0;top:0" width="4" height="9"><path d="M0 0 H3.200 L0 8.500Z" fill="#ddd6d4"/></svg><div id="barline"></div>
<div id="pill"></div><div id="chip"></div>
<svg class="abs" style="left:26px;top:21px" width="36" height="36" viewBox="0 0 24 24"><path d="M20 11H7.83l5.59-5.59L12 4l-8 8 8 8 1.41-1.41L7.83 13H20v-2z" fill="#1f1f1f"/></svg>
<svg class="abs" style="left:98px;top:21px" width="36" height="36" viewBox="0 0 24 24"><path d="M12 4l-1.41 1.41L16.17 11H4v2h12.17l-5.58 5.59L12 20l8-8z" fill="#9e9e9e"/></svg>
<svg class="abs" style="left:170.5px;top:21px" width="36" height="36" viewBox="0 0 24 24"><path d="M17.65 6.35C16.2 4.9 14.21 4 12 4c-4.42 0-7.99 3.58-7.99 8s3.57 8 7.99 8c3.73 0 6.84-2.55 7.73-6h-2.08c-.82 2.33-3.04 4-5.65 4-3.31 0-6-2.69-6-6s2.69-6 6-6c1.66 0 3.14.69 4.22 1.78L13 11h7V4l-2.35 2.35z" fill="#1f1f1f"/></svg>
<svg class="abs" style="left:258px;top:24px" width="32" height="28" viewBox="0 0 32 28"><path d="M16 5 L28.600 25 H3.400 Z" fill="none" stroke="#1f1f1f" stroke-width="2.800" stroke-linejoin="miter"/><rect x="14.7" y="11" width="2.6" height="7.5" fill="#1f1f1f"/><rect x="14.7" y="20" width="2.6" height="2.8" fill="#1f1f1f"/></svg>
<svg class="abs" style="left:297.500px;top:28.300px" width="73" height="24.800" preserveAspectRatio="none" viewBox="0 0 74 28" fill="none" stroke="#1f1f1f" stroke-width="2.1" stroke-linecap="butt">
<!-- bu -->
<path d="M1 4 H23"/><path d="M13 4 C10 11 6 15 1 18"/><path d="M12 9 V26"/><path d="M15 12 C18 14 21 16 23 18"/>
<!-- an -->
<path d="M36.5 1 V5"/><path d="M26 9 V5.5 H47 V9"/><path d="M25 14 H48"/><path d="M35 9 C33 15 31 19 28 23"/><path d="M42 14 C40 20 34 24 27 26"/><path d="M30 19 C36 21 42 23 46 26"/>
<!-- quan -->
<path d="M61.5 1 C58 7 54 10 50 12.5"/><path d="M61.5 1 C64 6 69 10 73 12.5"/><path d="M54.5 13 H68.5"/><path d="M55.5 19 H67.5"/><path d="M61.5 13 V25"/><path d="M51 25.5 H72"/>
</svg>
<div id="url"><b>site1.com</b>/fpm_status?full</div>
<svg class="abs" style="left:2528px;top:18px" width="44" height="42" viewBox="2528 18 44 42"><path d="M2532 25.500 Q2532 23 2534.500 23 H2544 L2553.500 54.800 H2549 L2547.200 49 H2534.500 Q2532 49 2532 46.500 Z" fill="#5f6368"/><rect x="2547.500" y="29.500" width="16.500" height="25" rx="2.200" fill="none" stroke="#5f6368" stroke-width="1.800"/><path d="M2543.800 34.200 A5 5 0 1 0 2545 38.200 H2540.200" fill="none" stroke="#fff" stroke-width="2.100"/><path d="M2551.500 36.600 H2562 M2556.600 33.800 V36.600 M2560 36.600 C2559 41 2556 45 2552 47.800 M2553.500 39 C2555 43 2558 46 2561.500 47.800" fill="none" stroke="#5f6368" stroke-width="1.600"/></svg>

<div id="win"></div>
<div id="title"></div>
<svg class="abs" style="left:790px;top:123px" width="34" height="34" viewBox="0 0 34 34">
<rect x="1" y="1" width="30" height="22" fill="#cfcfcf"/><rect x="2.5" y="2.5" width="27" height="19" fill="#2b2b2b"/>
<path d="M5 6 l4 2 -4 2 M10 11 h3" stroke="#fff" stroke-width="1.4" fill="none"/>
<path d="M9 17 l6 -6 5 5 -6 6 5 5 -3 2 -9 -9z" fill="#e8494b"/><path d="M8 17 v3 l10 9 v-3z" fill="#b71c1c"/>
<path d="M17 13 l8 -6 4 3 -5 4 3 3 -3 2z" fill="#4a90e2"/><path d="M29 10 v3 l-4 3 -1 -2z" fill="#1e5bb8"/>
<path d="M19 21 l5 -4 3 2 3 -2 2 3 -12 9 -3 -4z" fill="#a4d41f"/><path d="M20 29 v3 l12 -9 v-3z" fill="#6f9a10"/>
</svg>
<div id="ttext"><span style="letter-spacing:-0.33px">192.168.126.130</span><span style="letter-spacing:0.62px"> rock-vmwarestation-2</span></div>
<svg class="abs" style="left:2355px;top:125px" width="220" height="30" viewBox="0 0 220 30" fill="none" stroke="#8a8a8a" stroke-width="1.8"><path d="M7 15 H27"/><rect x="99" y="6" width="18.500" height="18.500" rx="2"/><path d="M191.500 5.500 L210.500 24.500 M210.500 5.500 L191.500 24.500"/></svg>
<div class="menu" style="left:784px;letter-spacing:0.44px">Terminal</div>
<div class="menu" style="left:911px;letter-spacing:-0.71px">Sessions</div>
<div class="menu" style="left:1037px;letter-spacing:-0.22px">View</div>
<div class="menu" style="left:1119px;letter-spacing:-0.25px">X server</div>
<div class="menu" style="left:1239px;letter-spacing:0.38px">Tools</div>
<div class="menu" style="left:1328px;letter-spacing:0.20px">Settings</div>
<div class="menu" style="left:1450px;letter-spacing:-0.07px">Macros</div>
<div class="menu" style="left:1561px;letter-spacing:0.35px">Help</div>
<div id="menuline"></div>
<svg class="ti" style="left:786px" viewBox="0 0 32 32"><rect x="0" y="0.5" width="32" height="25" fill="#546e7a"/><rect x="2" y="2.5" width="28" height="21" fill="#bbdefb"/><rect x="13.5" y="25.5" width="5" height="3" fill="#546e7a"/><rect x="6" y="28" width="20" height="3.2" rx="1" fill="#455a64"/>
<path d="M12 7 l4 -3 4 3 v6 l-4 2 -4 -2z" fill="#1e63ff"/><path d="M12 7 l4 -3 4 3 -4 2z" fill="#0000e0"/><path d="M16 9 l4 -2 v6 l-4 2z" fill="#3d8bff"/>
<path d="M7 14.5 l4.5 -3 4.5 3 v6 l-4.5 2.5 -4.5 -2.5z" fill="#e65100"/><path d="M7 14.5 l4.5 -3 4.5 3 -4.5 2.5z" fill="#ff1a00"/><path d="M11.500 17 l4.5 -2.500 v6 l-4.500 2.500z" fill="#f57c00"/>
<path d="M16 14.5 l4.500 -3 4.500 3 v6 l-4.500 2.500 -4.500 -2.500z" fill="#00a81c"/><path d="M16 14.500 l4.500 -3 4.500 3 -4.500 2.500z" fill="#0b7a12"/><path d="M20.500 17 l4.500 -2.500 v6 l-4.500 2.500z" fill="#12d22e"/></svg>
<svg class="ti" style="left:830px" viewBox="0 0 32 32"><g stroke="#cfd8dc" stroke-width="2.2"><path d="M17 15.300 L17 3 M17 15.300 L4 7.200 M17 15.300 L27.900 13.300 M17 15.300 L7.100 28.100 M17 15.300 L24.100 26.800"/></g><circle cx="17" cy="15.300" r="5.200" fill="#3f51b5"/><g fill="#00bcd4"><circle cx="17" cy="3.400" r="3.700"/><circle cx="4.200" cy="7.200" r="3.700"/><circle cx="27.900" cy="13.300" r="3.700"/><circle cx="7.100" cy="28.100" r="3.700"/><circle cx="24.100" cy="26.800" r="3.700"/></g></svg>
<svg class="ti" style="left:874px" viewBox="0 0 32 32"><path d="M0.300 0.300 C4 1.500 8 5 11 10 L11 16 C6.500 12 2 6.500 0.300 0.300Z" fill="#aab0e0"/><path d="M20.500 4 C25 7.500 29.500 13 32 19 L28 18.500 C26 16 23 13 20.500 11Z" fill="#b4b8e4"/><path d="M2.200 14 C-0.500 19 2.500 25 11 27.500 L11 23 C8 22 6 20.500 6 18 L7.500 16 L4.500 17.500 L4.500 14.500Z" fill="#9fa6dc"/><rect x="10.800" y="0.300" width="10" height="30.900" rx="5" fill="#ff3d00"/><circle cx="15.800" cy="5.500" r="1.300" fill="#d32f00"/><path d="M14.800 23.200 h2 v2 h2 v2 h-2 v2 h-2 v-2 h-2 v-2 h2z" fill="#fff"/><path d="M20.900 25 H31.800 L26.300 31.700Z" fill="#0a7d0a"/></svg>
<svg class="ti" style="left:918px" viewBox="0 0 32 32"><path d="M16.0 1.0 L20.5 11.5 L31.8 12.5 L23.2 19.9 L25.8 31.0 L16.0 25.2 L6.2 31.0 L8.8 19.9 L0.2 12.5 L11.5 11.5Z" fill="#f2c10a"/><path d="M21.700 25 H31.800 L26.800 31.200Z" fill="#0a7d0a"/></svg>
<svg class="ti" style="left:962px" viewBox="0 0 32 32"><rect x="0" y="0.300" width="32" height="22" fill="#546e7a"/><rect x="1.800" y="2" width="28.400" height="18.600" fill="#bbdefb"/><path d="M5.800 28.500 C5.800 24 9 21.500 16 21.500 C23 21.500 25 24 25 28.500Z" fill="#7cb342"/><path d="M12 21.500 h8 l-4 3.500z" fill="#558b2f"/><rect x="13" y="18" width="6" height="4.500" rx="1.500" fill="#ff9800"/><ellipse cx="16" cy="11.300" rx="6.900" ry="7.600" fill="#424242"/><path d="M21.400 25 H31.800 L26.600 31.300Z" fill="#0a7d0a"/></svg>
<svg class="ti" style="left:1006px" viewBox="0 0 32 32"><rect x="0" y="0.300" width="32" height="22" fill="#546e7a"/><rect x="1.800" y="2" width="28.400" height="18.600" fill="#bbdefb"/><g fill="#2196f3"><rect x="3.800" y="4.100" width="11" height="5.800"/><rect x="17" y="4.100" width="11.200" height="5.800"/><rect x="3.800" y="11.800" width="11" height="5.800"/><rect x="17" y="11.800" width="11.200" height="5.800"/></g><rect x="13.500" y="22" width="5" height="4.500" fill="#546e7a"/><rect x="6" y="26.200" width="15" height="2" fill="#455a64"/><path d="M21 25 H31.500 L26.200 31.300Z" fill="#0a7d0a"/></svg>
<svg class="ti" style="left:1050px" viewBox="0 0 32 32"><g fill="none" stroke="#3f51b5" stroke-width="4.600"><path d="M6 7 C6 16 9 19 16 20.500 V32"/><path d="M25.600 7 C25.600 16 23 19 16 20.500"/></g><path d="M0 8.300 L6 0.300 L12.400 8.300Z M19.500 8.300 L25.600 0.300 L32 8.300Z" fill="#3f51b5"/></svg>
<svg class="ti" style="left:1094px" viewBox="0 0 32 32"><rect x="0" y="0" width="32" height="22.800" fill="#333"/><rect x="2" y="2" width="28" height="18.800" fill="#def0fd"/><path d="M5.500 11.700 L11 7.500 V10 H15.300 V13.400 H11 V16 Z M26.700 11.700 L21.200 7.500 V10 H17.900 V13.400 H21.200 V16Z" fill="#0a9a0a"/><rect x="15.200" y="22.800" width="1.800" height="5" fill="#546e7a"/><rect x="0" y="28.400" width="32" height="1.600" fill="#607d8b"/><rect x="8" y="26.800" width="15.800" height="5" rx="2.400" fill="#ff6d00"/></svg>
<svg class="ti" style="left:1138px" viewBox="0 0 32 32"><path d="M5.500 3 H26 Q28 3 28.500 5 L31 21 H1 L3.400 5 Q3.800 3 5.500 3Z" fill="#8fa8d7"/><path d="M1 21 H31 V28 Q31 31.800 27.500 31.800 H4.500 Q1 31.800 1 28Z" fill="#c7d6f1"/><circle cx="25" cy="28" r="1.800" fill="#64dd17"/><path d="M14 0 H18 V13 H22.200 L16 18.500 L9.800 13 H14Z" fill="#3949ab"/></svg>
<svg class="ti" style="left:1182px" viewBox="0 0 32 32"><g fill="none"><circle cx="9.700" cy="22.200" r="6" stroke="#1e88e5" stroke-width="4.400"/><circle cx="9.700" cy="22.200" r="8.500" stroke="#1e88e5" stroke-width="3.200" stroke-dasharray="3.800 5.100" stroke-dashoffset="1.900"/><circle cx="24" cy="7.800" r="4.600" stroke="#3f51b5" stroke-width="3.600"/><circle cx="24" cy="7.800" r="6.700" stroke="#3f51b5" stroke-width="2.800" stroke-dasharray="3 4.020" stroke-dashoffset="1.500"/></g></svg>
<svg class="ti" style="left:1226px" viewBox="0 0 32 32"><circle cx="16" cy="16" r="16" fill="#2196f3"/><path d="M11.300 11.800 C11.300 6.500 20.800 6.500 20.800 11.600 C20.800 15 16.200 15.500 16.200 19.800" fill="none" stroke="#fff" stroke-width="3.300"/><circle cx="16.200" cy="24.700" r="2.100" fill="#fff"/></svg>
<svg class="ti" style="left:1270px" viewBox="0 0 32 32"><circle cx="16" cy="16" r="16" fill="#f44336"/><rect x="8.300" y="13.800" width="15.400" height="4.400" fill="#fff"/></svg>

<!-- tabs -->
<svg class="abs" style="left:846px;top:256px" width="1729" height="54" viewBox="846 256 1729 54">
<defs>
<linearGradient id="gh" x1="0" y1="0" x2="0" y2="1"><stop offset="0" stop-color="#fbfbfb"/><stop offset="1" stop-color="#dcdada"/></linearGradient>
<linearGradient id="gd" x1="0" y1="0" x2="0" y2="1"><stop offset="0" stop-color="#4d4d4d"/><stop offset="0.55" stop-color="#2a2a2a"/><stop offset="1" stop-color="#1c1c1c"/></linearGradient>
<linearGradient id="gl" x1="0" y1="0" x2="0" y2="1"><stop offset="0" stop-color="#fdfdfd"/><stop offset="0.7" stop-color="#f0f0f0"/><stop offset="1" stop-color="#d4d4d4"/></linearGradient>
<linearGradient id="fd1" x1="0" y1="0" x2="1" y2="0"><stop offset="0" stop-color="#2f2f2f" stop-opacity="0"/><stop offset="1" stop-color="#2f2f2f" stop-opacity="1"/></linearGradient>
</defs>
<!-- second (inactive) tab -->
<path d="M1418 308 L1440 268 C1443 262 1446 260.500 1452 260.500 H1890 C1896 260.500 1899 262 1901.500 268 L1915 301 C1917 305 1919 307 1925 308 Z" fill="url(#gl)" stroke="#c9cdd6" stroke-width="1"/>
<!-- home tab -->
<path d="M850.500 308 C856 307 858 305 860 301 L874 267 C876 262 879 260.500 884 260.500 H931 C936 260.500 939 262 941 267 L957 308 Z" fill="url(#gh)" stroke="#c9d5e6" stroke-width="1"/>
<!-- active tab -->
<path d="M935 308 C940 307 942 305 944 301 L957.500 268 C960 262 963 260.500 969 260.500 H1409 C1415 260.500 1418 262 1420.500 268 L1434 301 C1436 305 1438 307 1444 308 Z" fill="url(#gd)"/>
<!-- new tab button -->
<path d="M1917 268.5 H1972 L1983 296.5 H1930 C1925 296.5 1923 294 1921.5 290 Z" fill="#d3dae4" stroke="#b4bccb" stroke-width="1"/>
<path d="M1944.500 281 h5 v-5 h4 v5 h5 v4 h-5 v5 h-4 v-5 h-5z" fill="#f6f6f6" stroke="#909090" stroke-width="1"/>
<!-- paperclip -->
<path d="M2570.200 266.700 L2559 281 A9.300 9.300 0 0 0 2573.500 292.600 L2581 283.500 M2581 266.500 L2564.500 286 A3.600 3.600 0 0 0 2570 290.500 L2581 277" fill="none" stroke="#3f51b5" stroke-width="2.900" stroke-linecap="round"/>
</svg>
<!-- home icon -->
<svg class="abs" style="left:890px;top:269px" width="34" height="34" viewBox="0 0 34 34">
<rect x="24" y="4" width="4" height="9" fill="#9fa8da"/>
<path d="M4 17 L17 4 L30 17 V29 H4Z" fill="#e4e4e6"/>
<rect x="2" y="26.5" width="30" height="4" fill="#b7bdea"/>
<path d="M1.5 16 L17 1.5 L32.5 16" fill="none" stroke="#c01818" stroke-width="3"/>
<rect x="14.5" y="10" width="5" height="5" fill="#0d5aa7"/>
<rect x="12.5" y="18.5" width="9" height="12" fill="#e04a1a"/>
</svg>
<!-- key icons -->
<svg class="abs" style="left:970px;top:271px" width="32" height="26" viewBox="0 0 32 26"><rect x="0.75" y="0.75" width="30.5" height="24.5" fill="#2b2b2b" stroke="#b0b0b0" stroke-width="1.5"/><circle cx="10.5" cy="8.5" r="4.9" fill="#f7c31c"/><circle cx="9" cy="7" r="1.3" fill="#2b2b2b"/><path d="M12.5 11.5 L22.5 20" stroke="#f7c31c" stroke-width="4.2" stroke-linecap="round" fill="none"/><path d="M18 19.5 l2 -2.5 M15.5 17 l1.5 -2" stroke="#d9a50f" stroke-width="1.2"/></svg>
<svg class="abs" style="left:1451px;top:271px" width="32" height="26" viewBox="0 0 32 26"><rect x="0.75" y="0.75" width="30.5" height="24.5" fill="#2b2b2b" stroke="#9a9a9a" stroke-width="1.5"/><circle cx="10.5" cy="8.5" r="4.9" fill="#f7c31c"/><circle cx="9" cy="7" r="1.3" fill="#2b2b2b"/><path d="M12.5 11.5 L22.5 20" stroke="#f7c31c" stroke-width="4.2" stroke-linecap="round" fill="none"/><path d="M18 19.5 l2 -2.5 M15.5 17 l1.5 -2" stroke="#d9a50f" stroke-width="1.2"/></svg>
<div class="tabtxt" style="left:1007px;width:372px;color:#fafafa;-webkit-mask-image:linear-gradient(90deg,#000 81%,transparent 97%);mask-image:linear-gradient(90deg,#000 81%,transparent 97%)">2. 192.168.126.130 rock-vmwarestation-2</div>
<svg class="abs" style="left:1385px;top:274px" width="18" height="18" viewBox="0 0 18 18"><path d="M2.5 2.5 L15.5 15.5 M15.5 2.5 L2.5 15.5" stroke="#d8d8d8" stroke-width="1.35"/></svg>
<div class="tabtxt" style="left:1487px;width:375px;color:#111;-webkit-mask-image:linear-gradient(90deg,#000 81%,transparent 97%);mask-image:linear-gradient(90deg,#000 81%,transparent 97%)">7. 192.168.126.134 rock-vmwarestation-2</div>
<svg class="abs" style="left:1866px;top:274px" width="18" height="18" viewBox="0 0 18 18"><path d="M2.5 2.5 L15.5 15.5 M15.5 2.5 L2.5 15.5" stroke="#fff" stroke-width="1.6"/></svg>
<div class="sc" style="top:310px;background:#d9e8fc"></div>
<div class="sc" style="top:382px"></div>
<div class="sc" style="top:454px"></div>
<div class="sc" style="top:526px"></div>
<svg class="abs" style="left:788px;top:323px" width="48" height="46" viewBox="0 0 32 31"><path d="M16.0 0.0 L20.5 10.5 L31.8 11.5 L23.2 18.9 L25.8 30.0 L16.0 24.2 L6.2 30.0 L8.800 18.9 L0.2 11.5 L11.5 10.5Z" fill="#f2c100"/></svg>
<svg class="abs" style="left:786px;top:392px" width="52" height="52" viewBox="0 0 52 52" opacity="0.55"><path d="M2 4 C8 7 14 13 19 22 L19 27 C12 20 5 12 2 4Z" fill="#aab0e0"/><path d="M33 9 C40 15 46 22 50 30 L45 28 C41 23 37 19 33 16Z" fill="#b4b8e4"/><path d="M4 24 C1 32 6 39 18 43 L18 38 C12 36 8 33 9 28 L6 30Z" fill="#9fa6dc"/><rect x="17.500" y="2" width="15" height="48" rx="7.500" fill="#ff3d00"/><circle cx="25" cy="10" r="2" fill="#d32f00"/><path d="M23.500 37 h3 v3 h3 v3 h-3 v3 h-3 v-3 h-3 v-3 h3z" fill="#fff"/></svg>
<svg class="abs" style="left:787px;top:466px" width="50" height="50" viewBox="0 0 50 50"><path d="M1 24 L48 1 L32 48 L19 34 L12 43 L10 30Z" fill="#bcdaf5"/><path d="M10 30 L48 1 L19 34 L12 43Z" fill="#7ea9dc"/><path d="M19 34 L48 1 L32 48Z" fill="#c2ddf6"/></svg>
<svg class="abs" style="left:789px;top:540px" width="46" height="46" viewBox="0 0 46 46"><circle cx="23" cy="23" r="22" fill="#f7b56d"/><path d="M5 15 C8 9 13 5 19 3.500 L22 6 L18 9 L21 11 L17 14 L19 17 L14 19 L12 23 L8 22 L6 25 C4 22 4 18 5 15Z M26 4 C32 5 37 8 40 13 L36 14 L38 18 L34 19 L36 24 L39 23 L42 26 C41 31 39 35 36 38 L33 34 L34 29 L30 27 L28 22 L31 18 L27 15 L29 11 L25 9Z M12 28 L16 27 L21 30 L24 34 L22 38 L23 42 L19 44 C15 42 13 37 12 33Z" fill="#fad85e"/></svg>

<div id="term"></div><div class="abs" style="left:1444px;top:307px;width:1125px;height:1px;background:#9c9c9c"></div>
<div class="abs" style="left:2569px;top:307px;width:6px;height:1266px;background:#efefef"></div>
<pre id="tt">root           1  0.0  0.6 102996 12332 ?        Ss   09:28   0:06 /usr/lib/systemd/systemd <i>--switch</i>
<i>root</i>         629  0.0  0.7 100452 13332 ?        Ss   09:28   0:05 /usr/lib/systemd/systemd-journald
root         643  0.0  0.5  31620  9632 ?        Ss   09:28   0:00 /usr/lib/systemd/systemd-udevd
root         667  0.0  0.1  18156  2312 ?        S&lt;sl 09:28   0:00 /sbin/auditd
root         689  0.0  1.0 256436 18948 ?        Ssl  09:28   0:05 /usr/sbin/NetworkManager <i>--no-dae</i>
<i>root</i>         691  0.0  0.1  79248  2856 ?        Ssl  09:28   0:01 /usr/sbin/irqbalance <i>--foreground</i>
<i>root</i>         692  0.0  0.3 164792  6052 ?        Ssl  09:28   0:04 /usr/sbin/rsyslogd <i>-n</i>
root         693  0.0  0.4  18272  8928 ?        Ss   09:28   0:00 /usr/lib/systemd/systemd-logind
chrony       695  0.0  0.1  84340  3344 ?        S    09:28   0:00 /usr/sbin/chronyd <i>-F</i> 2
dbus         706  0.0  0.2  10824  4496 ?        Ss   09:28   0:00 /usr/bin/dbus-broker-launch <i>--sco</i>
<i>dbus</i>         710  0.0  0.1   5124  2876 ?        S    09:28   0:00  \_ dbus-broker <i>--log</i> 4 <i>--control</i>
<i>root</i>         716  0.0  2.9 766800 53712 ?        Ssl  09:28   0:10 /usr/bin/gitlab-runner run <i>--work</i>
<i>root</i>         717  0.0  0.4  15840  8796 ?        Ss   09:28   0:00 sshd: /usr/sbin/sshd <i>-D</i> [listener
root        1146  0.0  0.6  18760 11940 ?        Ss   09:37   0:00  \_ sshd: root [priv]
root        1162  0.0  0.3  19128  7004 ?        S    09:37   0:00  |   \_ sshd: root@pts/0
root        1164  0.0  0.2   8116  4940 pts/0    Ss   09:37   0:00  |       \_ <i>-bash</i>
root        1523  0.0  0.1  10320  3432 pts/0    R+   13:45   0:00  |           \_ ps auxf
root        1148  0.0  0.6  18784 11992 ?        Ss   09:37   0:00  \_ sshd: root [priv]
root        1163  0.0  0.3  18784  6804 ?        S    09:37   0:00      \_ sshd: root@notty
root        1165  0.0  0.3   8452  5680 ?        Ss   09:37   0:00          \_ /usr/libexec/openssh/
root         722  0.0  0.2   8592  3732 ?        Ss   09:28   0:00 /usr/sbin/crond <i>-n</i>
root         781  0.0  0.0   3044  1072 tty1     Ss+  09:28   0:00 /sbin/agetty <i>-o</i> <i>-p</i> <i>--</i> \u <i>--noclea</i>
<i>root</i>        1151  0.0  0.6  19836 11216 ?        Ss   09:37   0:00 /usr/lib/systemd/systemd <i>--user</i>
root        1152  0.0  0.1 104172  3060 ?        S    09:37   0:00  \_ (sd-pam)
root        1368  0.0  1.3 174084 24464 ?        Ss   11:21   0:00 php-fpm: master process (/etc/php
nginx       1370  0.0  2.2 252376 41176 ?        S    11:21   0:00  \_ php-fpm: pool www
nginx       1371  0.0  2.3 250300 41800 ?        S    11:21   0:01  \_ php-fpm: pool www
nginx       1372  0.0  1.8 176592 32948 ?        S    11:21   0:00  \_ php-fpm: pool www
nginx       1373  0.0  0.7 175832 13700 ?        S    11:21   0:00  \_ php-fpm: pool www
nginx       1374  0.0  0.7 175832 13612 ?        S    11:21   0:00  \_ php-fpm: pool www
nginx       1420  0.0  1.8 176592 32928 ?        S    11:24   0:00  \_ php-fpm: pool www
root        1391  0.0  0.1  54640  2716 ?        Ss   11:22   0:00 nginx: master process /usr/sbin/n
nginx       1392  0.0  0.5  57456 10616 ?        S    11:22   0:00  \_ nginx: worker process
nginx       1393  0.0  0.5  57456 10616 ?        S    11:22   0:00  \_ nginx: worker process
nginx       1394  0.0  0.4  57456  7900 ?        S    11:22   0:00  \_ nginx: cache manager process
[root@server ~]# </pre>
<div id="cursor"></div>
<div class="rb" style="left:840px;top:1180px;width:1584px;height:199px"></div>
<div class="gb" style="left:1054px;top:1169px;width:81px;height:219px;border-color:#25b24c"></div>

</body></html>
